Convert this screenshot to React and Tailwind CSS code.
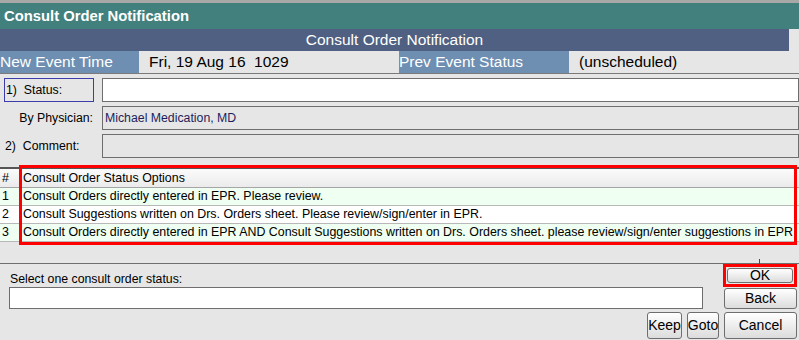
const options = [
  { n: "1", text: "Consult Orders directly entered in EPR. Please review.", bg: "bg-[#effff1]" },
  { n: "2", text: "Consult Suggestions written on Drs. Orders sheet. Please review/sign/enter in EPR.", bg: "bg-white" },
  {
    n: "3",
    text: "Consult Orders directly entered in EPR AND Consult Suggestions written on Drs. Orders sheet. please review/sign/enter suggestions in EPR",
    bg: "bg-[#effff1]",
  },
];

function Btn({ children, className = "" }) {
  return (
    <button
      className={`flex items-center justify-center rounded-[3px] border border-[#6e6e6e] bg-gradient-to-b from-white to-[#dcdcdc] text-[14px] text-black ${className}`}
    >
      {children}
    </button>
  );
}

export default function App() {
  return (
    <div className="relative w-[799px] h-[340px] overflow-hidden bg-[#e6e6e6] font-['Liberation_Sans',Arial,sans-serif] text-black">
      {/* window top edge */}
      <div className="h-[3px] bg-[#a8a8a8]" />

      {/* title bar */}
      <div className="h-[26px] bg-[#42807e] pl-[4px] flex items-center text-white font-bold text-[14.8px]">
        Consult Order Notification
      </div>

      {/* header band */}
      <div className="h-[22px] w-[789px] bg-[#4f6082] text-white text-[15.5px] leading-[22px] text-center">
        Consult Order Notification
      </div>

      {/* event row */}
      <div className="h-[23px] flex text-[15.5px] leading-[22px] border-b border-[#7a7a7a]">
        <div className="w-[139px] h-[22px] bg-[#6e8fb2] text-white">New Event Time</div>
        <div className="w-[260px] pl-[10px] whitespace-pre">Fri, 19 Aug 16  1029</div>
        <div className="w-[170px] h-[22px] bg-[#6e8fb2] text-white">Prev Event Status</div>
        <div className="pl-[10px]">(unscheduled)</div>
      </div>

      {/* form */}
      <div className="pt-[4px] flex flex-col gap-[4px] text-[12.3px]">
        <div className="flex h-[24px]">
          <div className="ml-[4px] w-[90px] border border-[#3c3caa] pl-[1px] flex items-center whitespace-pre">
            1)  Status:
          </div>
          <div className="ml-[8px] flex-1 border border-[#6e6e6e] bg-white" />
        </div>
        <div className="flex h-[24px]">
          <div className="ml-[4px] w-[90px] pr-[1px] flex items-center justify-end">By Physician:</div>
          <div className="ml-[8px] flex-1 border border-[#6e6e6e] pl-[2px] flex items-center text-[#1e1e5c]">
            Michael Medication, MD
          </div>
        </div>
        <div className="flex h-[24px]">
          <div className="ml-[4px] w-[90px] pl-[1px] flex items-center whitespace-pre">2)  Comment:</div>
          <div className="ml-[8px] flex-1 border border-[#6e6e6e]" />
        </div>
      </div>

      {/* options table */}
      <div className="relative mt-[9px] border-t-2 border-[#555555] text-[12.4px]">
        <div className="flex h-[19px] border-b border-[#a6a6a6] bg-gradient-to-b from-[#fbfbfb] to-[#ebebeb]">
          <div className="w-[21px] pl-[2px] border-r border-[#c4c4c4] flex items-center">#</div>
          <div className="pl-[2px] flex items-center">Consult Order Status Options</div>
        </div>
        {options.map((o) => (
          <div key={o.n} className={`flex h-[18px] border-b border-[#b8b8b8] ${o.bg}`}>
            <div className="w-[21px] pl-[2px] border-r border-[#c4c4c4] flex items-center">{o.n}</div>
            <div className="pl-[2px] flex items-center whitespace-nowrap">{o.text}</div>
          </div>
        ))}
        {/* highlight box */}
        <div className="absolute left-[19px] top-[-4px] w-[778px] h-[80px] border-[3px] border-[#ff0000] pointer-events-none" />
      </div>

      {/* separator */}
      <div className="mt-[21px] border-t border-[#6e6e6e]" />

      {/* bottom controls */}
      <div className="relative pr-[2px] text-[12.3px]">
        <div className="absolute left-[759px] top-[-5px] w-[1px] h-[5px] bg-[#ff0000]" />
        <div className="flex h-[23px]">
          <div className="flex-1 pl-[10px] pt-[6px]">Select one consult order status:</div>
          <div className="w-[74px] h-[23px] border-[3px] border-[#ff0000] p-[1px]">
            <Btn className="w-full h-full">OK</Btn>
          </div>
        </div>
        <div className="flex h-[22px]">
          <div className="ml-[9px] w-[694px] h-[22px] border border-[#6e6e6e] bg-white" />
          <div className="ml-auto pt-[1px]">
            <Btn className="w-[73px] h-[21px]">Back</Btn>
          </div>
        </div>
        <div className="mt-[3px] flex justify-end gap-[5px]">
          <Btn className="w-[35px] h-[27px]">Keep</Btn>
          <Btn className="w-[32px] h-[27px]">Goto</Btn>
          <Btn className="w-[73px] h-[27px]">Cancel</Btn>
        </div>
      </div>
    </div>
  );
}
